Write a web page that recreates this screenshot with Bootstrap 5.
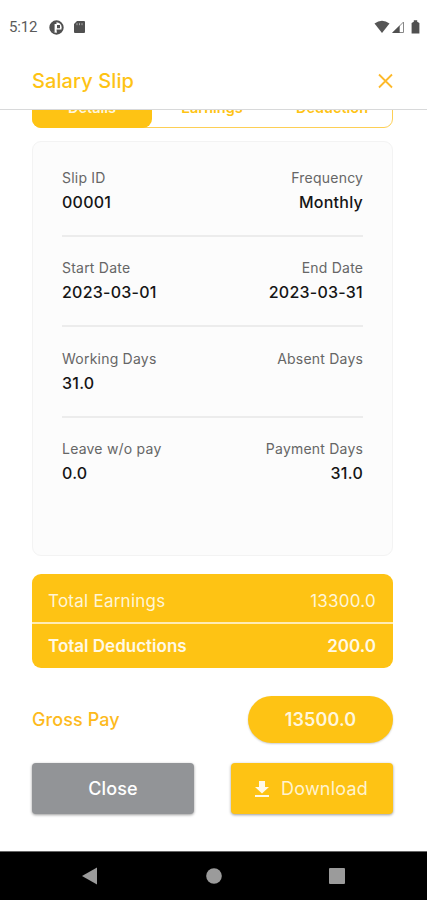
<!DOCTYPE html>
<html lang="en">
<head>
<meta charset="utf-8">
<meta name="viewport" content="width=device-width, initial-scale=1">
<title>Salary Slip</title>
<link href="https://cdn.jsdelivr.net/npm/bootstrap@5.3.0/dist/css/bootstrap.min.css" rel="stylesheet">
<style>
  :root { --amber: #fec314; }
  body { font-family: Inter, "Liberation Sans", sans-serif; width: 427px; height: 900px; background: #fff; }
  svg { display: block; flex: none; }
  .status { height: 54px; padding: 0 7px 0 9px; font: 15px Roboto, sans-serif; color: #5a5a5a; letter-spacing: -.2px; }
  .status-time { width: 40px; }
  .sig { margin-left: 1px; }
  .batt { margin-left: 6px; }
  .app-head { height: 56px; padding: 0 33px 0 32px; border-bottom: 1px solid #d8d9da; }
  .app-title { font-size: 20px; font-weight: 500; color: var(--amber); letter-spacing: .1px; line-height: 24px; margin-top: -1px; }
  .scroll-clip { height: 18px; margin: 0 34px 0 32px; }
  .tabs { height: 40px; border: 1px solid #fdcf55; border-radius: 9px; font-size: 14.5px; font-weight: 600; color: var(--amber); }
  .tab-item { width: 120px; height: 40px; line-height: 40px; text-align: center; }
  .tab-on { background: var(--amber); color: #fff6dc; border-radius: 9px; margin-left: -1px; }
  .slip { height: 415px; margin: 13px 34px 0 32px; padding: 24px 29px 0; background: #fcfcfc; border: 1px solid #f3f3f3; border-radius: 9px; }
  .slip-row { height: 71px; margin-bottom: 19.3px; border-bottom: 2px solid #ececec; }
  .slip-row:last-child { border: 0; }
  .lbl { font-size: 14px; line-height: 24px; color: #666; letter-spacing: .22px; }
  .val { font-size: 16px; line-height: 24px; font-weight: 500; color: #151515; letter-spacing: .25px; }
  .text-end .lbl { margin-right: -.2px; }
  .totals { margin: 18px 34px 0 32px; border-radius: 9px; background: var(--amber); color: #fff5d6; font-size: 17px; overflow: hidden; }
  .total-row { padding: 0 17px 0 16px; }
  .total-a { height: 50px; padding-top: 7px; border-bottom: 2px solid #ffecb5; letter-spacing: .25px; }
  .total-b { height: 44px; padding-top: 1px; font-weight: 600; color: #fff9e6; }
  .gross { height: 47px; margin: 28px 34px 0 32px; font-size: 18px; color: #fdba1c; font-weight: 500; letter-spacing: .1px; }
  .gross-pill { width: 145px; height: 47px; background: var(--amber); color: #fff6dc; font-weight: 600; box-shadow: 0 1px 2px #0003; }
  .acts { margin: 20px 34px 0 32px; }
  .act { height: 51px; width: 162px; border: 0; border-radius: 4px; padding: 0; font-size: 18px; box-shadow: 0 1px 3px #0006; letter-spacing: .1px; }
  .act-close { background: #929497; color: #fff; font-weight: 500; }
  .act-down { background: var(--amber); color: #fff3cf; gap: 11px; padding-right: 2px; letter-spacing: .2px; }
  .sysnav { height: 49px; background: #000; border-top: 1px solid #666; padding: 0 82px 0 81px; }
</style>
</head>
<body class="d-flex flex-column overflow-hidden">
  <div class="status d-flex align-items-center">
    <span class="status-time">5:12</span>
    <svg width="15" height="15" viewBox="0 0 15 15"><circle cx="7.5" cy="7.5" r="6.2" fill="#fff" stroke="#505050" stroke-width="2"/><path d="M1.5 4Q5 0 7.5 2.2V4H5.6v8.5Q1 11.5 1.5 4zM8 5h3v3.2H8zM7.5 9.5H12V12l-4 2z" fill="#505050"/></svg>
    <svg class="ms-2" width="14" height="14" viewBox="0 0 14 14"><path d="M5 1h7q1 0 1 1v10q0 1-1 1H3q-1 0-1-1V4z" fill="#505050"/><path d="M5 3.2v2M7.5 3.2v2M10 3.2v2" stroke="#aaa"/></svg>
    <div class="ms-auto d-flex align-items-center">
      <svg width="16" height="14" viewBox="0 0 16 14"><path d="M.5 3.6Q8-2.2 15.5 3.6L8 13z" fill="#555"/></svg>
      <svg class="sig" width="14" height="14" viewBox="0 0 14 14"><path d="M12.5 2v10.5H2z" fill="#fff" stroke="#888"/><path d="M1 13 8.7 5.5V13z" fill="#505050"/></svg>
      <svg class="batt" width="9" height="14" viewBox="0 0 9 14"><path d="M2.8.3h3.4v1.4L8.4 3v10.5H.6V3l2.2-1.3z" fill="#505050"/></svg>
    </div>
  </div>
  <header class="app-head d-flex align-items-center justify-content-between">
    <h1 class="app-title mb-0">Salary Slip</h1>
    <svg width="17" height="17" viewBox="0 0 17 17"><path d="M2 1.5l13 13M15 1.5L2 14.5" stroke="#fdb92a" stroke-width="1.8"/></svg>
  </header>
  <div class="scroll-clip d-flex flex-column justify-content-end overflow-hidden">
    <nav class="tabs d-flex align-items-center flex-shrink-0">
      <div class="tab-item tab-on">Details</div>
      <div class="tab-item">Earnings</div>
      <div class="tab-item">Deduction</div>
    </nav>
  </div>
  <section class="slip">
    <div class="slip-row d-flex justify-content-between">
      <div><div class="lbl">Slip ID</div><div class="val">00001</div></div>
      <div class="text-end"><div class="lbl">Frequency</div><div class="val">Monthly</div></div>
    </div>
    <div class="slip-row d-flex justify-content-between">
      <div><div class="lbl">Start Date</div><div class="val">2023-03-01</div></div>
      <div class="text-end"><div class="lbl">End Date</div><div class="val">2023-03-31</div></div>
    </div>
    <div class="slip-row d-flex justify-content-between">
      <div><div class="lbl">Working Days</div><div class="val">31.0</div></div>
      <div class="text-end"><div class="lbl">Absent Days</div></div>
    </div>
    <div class="slip-row d-flex justify-content-between">
      <div><div class="lbl">Leave w/o pay</div><div class="val">0.0</div></div>
      <div class="text-end"><div class="lbl">Payment Days</div><div class="val">31.0</div></div>
    </div>
  </section>
  <section class="totals">
    <div class="total-row total-a d-flex align-items-center justify-content-between"><span>Total Earnings</span><span>13300.0</span></div>
    <div class="total-row total-b d-flex align-items-center justify-content-between"><span>Total Deductions</span><span>200.0</span></div>
  </section>
  <div class="gross d-flex align-items-center justify-content-between">
    <span>Gross Pay</span>
    <span class="gross-pill rounded-pill d-flex align-items-center justify-content-center">13500.0</span>
  </div>
  <div class="acts d-flex justify-content-between">
    <button class="btn act act-close">Close</button>
    <button class="btn act act-down d-flex align-items-center justify-content-center"><svg width="16" height="18" viewBox="0 0 16 18"><path d="M5 1h6v6h4L8 13.5 1 7h4zM1 15h14v2H1z" fill="#fff9e8"/></svg>Download</button>
  </div>
  <footer class="sysnav mt-auto d-flex align-items-center justify-content-between">
    <svg width="17" height="18" viewBox="0 0 17 18"><path d="M1 9 16 .5v17z" fill="#9b9b9b"/></svg>
    <svg width="16" height="16" viewBox="0 0 16 16"><circle cx="8" cy="8" r="7.8" fill="#9b9b9b"/></svg>
    <svg width="16" height="16" viewBox="0 0 16 16"><rect width="16" height="16" rx="1" fill="#9b9b9b"/></svg>
  </footer>
<script src="https://cdn.jsdelivr.net/npm/bootstrap@5.3.0/dist/js/bootstrap.bundle.min.js"></script>
</body>
</html>
